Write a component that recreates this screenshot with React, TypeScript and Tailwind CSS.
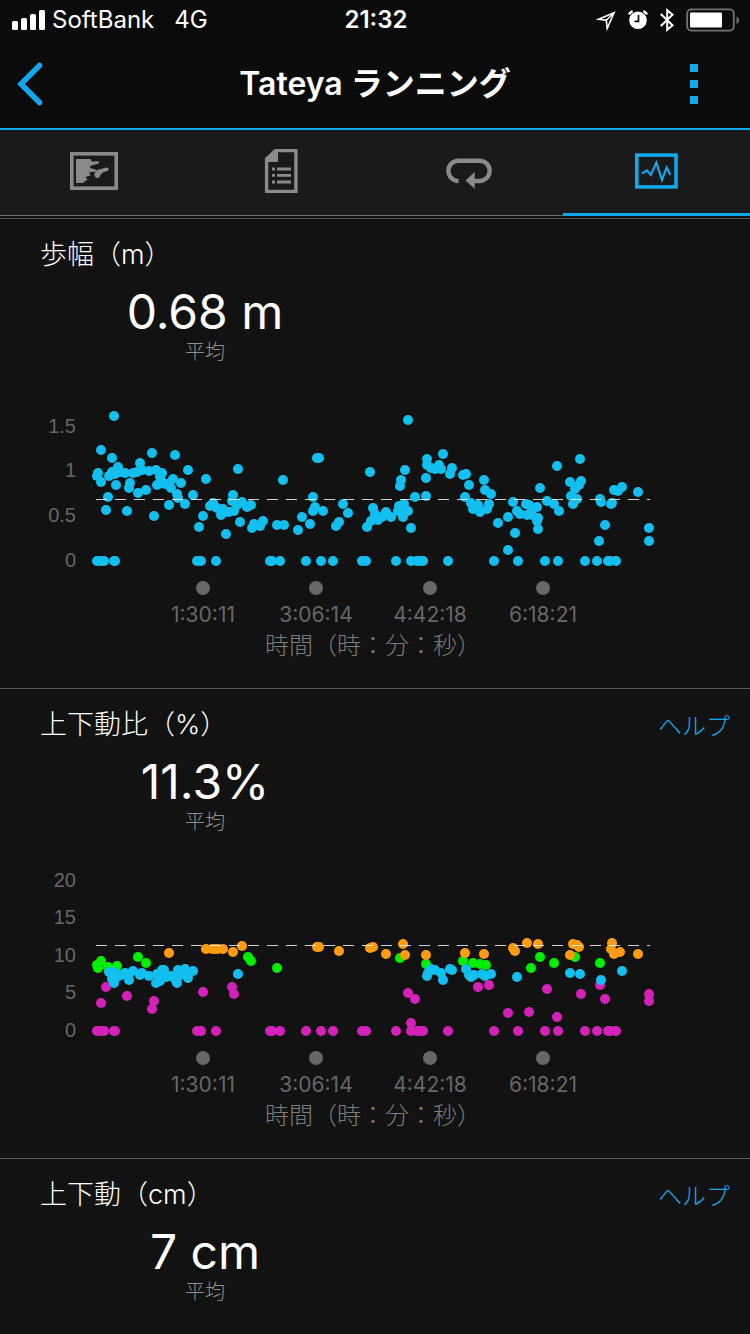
import type { ReactNode } from 'react';

type Point = [x: number, y: number];

interface Series {
  color: string;
  points: Point[];
}

interface ChartProps {
  label: string;
  ticks: { text: string; y: number }[];
  averageY: number;
  series: Series[];
}

const BASELINE = 161;

const X_TICKS = [
  { x: 203, text: '1:30:11' },
  { x: 316, text: '3:06:14' },
  { x: 430, text: '4:42:18' },
  { x: 543, text: '6:18:21' },
];

// Samples taken while standing still
const STOPPED: Point[] = [
  97, 101, 104, 114, 115, 197, 201, 216, 270, 272, 280, 306, 321, 333, 362, 366, 396, 411, 417, 420,
  423, 448, 494, 518, 545, 558, 585, 597, 608, 610, 616,
].map((x) => [x, BASELINE]);

const STRIDE: Point[] = [
  [114, 16], [101, 50], [112, 58], [152, 53], [175, 55], [140, 63], [118, 67], [98, 73], [97, 76],
  [101, 82], [109, 76], [112, 72], [115, 74], [116, 85], [108, 97], [106, 110], [127, 111],
  [154, 116], [130, 83], [129, 88], [138, 93], [146, 90], [120, 72], [125, 73], [133, 73],
  [137, 72], [142, 70], [149, 71], [156, 70], [162, 73], [160, 77], [157, 85], [162, 82],
  [165, 84], [168, 84], [173, 79], [181, 83], [171, 88], [188, 70], [177, 94], [178, 98],
  [169, 105], [185, 104], [193, 95], [206, 79], [199, 127], [203, 116], [238, 69], [210, 106],
  [213, 103], [217, 108], [221, 115], [223, 109], [225, 112], [229, 112], [234, 111], [233, 95],
  [232, 101], [237, 105], [242, 102], [247, 107], [240, 122], [226, 134], [251, 105], [252, 128],
  [254, 124], [260, 126], [263, 121], [283, 80], [277, 125], [284, 125], [298, 130], [302, 117],
  [310, 124], [313, 111], [315, 107], [313, 97], [317, 58], [319, 58], [323, 111], [336, 126],
  [339, 122], [343, 104], [348, 113], [370, 72], [373, 108], [375, 114], [367, 127], [371, 121],
  [375, 117], [378, 120], [382, 117], [386, 112], [391, 117], [401, 80], [400, 86], [405, 70],
  [399, 106], [404, 104], [398, 111], [403, 117], [403, 111], [408, 111], [411, 128], [415, 97],
  [408, 20], [426, 96], [426, 78], [427, 59], [427, 65], [431, 68], [435, 69], [439, 65],
  [441, 69], [443, 54], [452, 68], [450, 74], [463, 75], [466, 74], [469, 85], [484, 80],
  [485, 90], [491, 94], [465, 97], [471, 103], [473, 109], [478, 105], [480, 112], [487, 109],
  [489, 104], [498, 123], [508, 117], [508, 150], [515, 133], [513, 102], [517, 111], [520, 114],
  [526, 104], [529, 105], [527, 115], [532, 109], [537, 107], [532, 115], [538, 118], [537, 121],
  [538, 129], [540, 88], [547, 101], [554, 104], [559, 111], [557, 66], [580, 59], [570, 82],
  [581, 81], [579, 85], [575, 89], [571, 96], [577, 99], [573, 104], [600, 99], [601, 102],
  [611, 104], [612, 103], [614, 90], [618, 91], [622, 87], [638, 92], [605, 125], [599, 141],
  [649, 128], [649, 141],
];

const RATIO_POOR: Point[] = [
  [106, 117], [101, 133], [127, 126], [154, 131], [152, 139], [203, 122], [232, 117], [234, 124],
  [408, 123], [415, 129], [411, 153], [478, 117], [489, 115], [547, 119], [508, 143], [529, 142],
  [557, 147], [581, 124], [600, 115], [605, 129], [649, 124], [649, 131],
];

const RATIO_FAIR: Point[] = [
  [169, 83], [206, 79], [212, 79], [215, 79], [218, 79], [223, 79], [233, 82], [242, 76],
  [317, 77], [319, 77], [339, 81], [370, 78], [373, 77], [386, 84], [403, 74], [405, 85],
  [426, 85], [465, 83], [484, 84], [513, 78], [515, 81], [527, 73], [538, 74], [570, 85],
  [573, 74], [577, 75], [579, 77], [612, 73], [611, 79], [614, 84], [620, 82], [638, 84],
];

const RATIO_GOOD: Point[] = [
  [101, 91], [97, 95], [98, 98], [108, 97], [117, 96], [138, 87], [146, 93], [248, 87], [251, 91],
  [277, 98], [400, 88], [426, 94], [463, 91], [473, 93], [480, 94], [486, 95], [540, 87],
  [531, 98], [554, 93], [575, 87], [600, 93],
];

const RATIO_GREAT: Point[] = [
  [109, 102], [112, 109], [114, 113], [114, 102], [117, 107], [121, 105], [125, 103], [129, 110],
  [129, 104], [133, 101], [140, 105], [142, 103], [149, 106], [156, 113], [157, 104], [160, 111],
  [162, 100], [164, 100], [166, 107], [171, 106], [175, 109], [177, 113], [178, 100], [179, 106],
  [185, 99], [188, 108], [193, 101], [183, 104], [238, 104], [427, 106], [428, 103], [431, 99],
  [435, 100], [441, 103], [443, 110], [450, 99], [452, 100], [466, 99], [469, 105], [471, 107],
  [474, 105], [482, 104], [485, 106], [491, 104], [517, 107], [570, 103], [580, 104], [601, 110],
  [622, 101],
];

const STRIDE_CHART: ChartProps = {
  label: '歩幅',
  ticks: [
    { text: '1.5', y: 26 },
    { text: '1', y: 70 },
    { text: '0.5', y: 115 },
    { text: '0', y: 160 },
  ],
  averageY: 99.5,
  series: [{ color: '#12bfee', points: [...STOPPED, ...STRIDE] }],
};

const RATIO_CHART: ChartProps = {
  label: '上下動比',
  ticks: [
    { text: '20', y: 10 },
    { text: '15', y: 47 },
    { text: '10', y: 85 },
    { text: '5', y: 122 },
    { text: '0', y: 160 },
  ],
  averageY: 75.5,
  series: [
    { color: '#d321ba', points: [...STOPPED, ...RATIO_POOR] },
    { color: '#00ef00', points: RATIO_GOOD },
    { color: '#12bfee', points: RATIO_GREAT },
    { color: '#ff9c10', points: RATIO_FAIR },
  ],
};

function ScatterChart({ label, ticks, averageY, series }: ChartProps) {
  return (
    <svg viewBox="0 0 750 288" className="block w-full" role="img" aria-label={label}>
      <g className="fill-[#676767] font-['Liberation_Sans',sans-serif] text-[20px]" textAnchor="end">
        {ticks.map((tick) => (
          <text key={tick.text} x="76" y={tick.y + 7}>
            {tick.text}
          </text>
        ))}
      </g>
      {series.map((s) => (
        <g key={s.color} fill={s.color}>
          {s.points.map(([x, y], i) => (
            <circle key={i} cx={x} cy={y} r="5" />
          ))}
        </g>
      ))}
      <line
        x1="96"
        x2="650"
        y1={averageY}
        y2={averageY}
        stroke="#fff"
        strokeOpacity="0.8"
        strokeDasharray="11 8"
      />
      <g className="fill-[#676767] text-[21px]" textAnchor="middle">
        {X_TICKS.map((tick) => (
          <g key={tick.text}>
            <circle cx={tick.x} cy="188" r="7" />
            <text x={tick.x} y="222">
              {tick.text}
            </text>
          </g>
        ))}
        <text x="373" y="254" className="fill-[#7c7c7c] text-[24px] font-light">
          時間（時：分：秒）
        </text>
      </g>
    </svg>
  );
}

interface MetricSectionProps {
  title: string;
  value: string;
  help?: boolean;
  children?: ReactNode;
}

function MetricSection({ title, value, help, children }: MetricSectionProps) {
  return (
    <section className="border-t border-[#585858] pt-4">
      <div className="flex items-center justify-between pr-5 pl-10">
        <h2 className="text-[27px] leading-10 font-light">{title}</h2>
        {help && (
          <a href="#help" className="pt-1 text-[24px] leading-9 font-light text-[#12a8ec]">
            ヘルプ
          </a>
        )}
      </div>
      <div className="mt-2 ml-10 flex w-[44%] flex-col items-center">
        <span className="text-[48px] leading-[57px]">{value}</span>
        <span className="text-[20px] leading-6 font-light text-[#8f8f8f]">平均</span>
      </div>
      <div className="pt-9">{children}</div>
    </section>
  );
}

function StatusBar() {
  return (
    <div className="flex h-10 items-center pr-1 pl-3 text-[24px] leading-10">
      <div className="flex flex-1 items-center">
        <svg viewBox="0 0 34 20" className="mr-[6px] h-5 w-[34px]" fill="#fff" aria-hidden="true">
          <rect x="0" y="11" width="6" height="9" rx="1.5" />
          <rect x="9" y="8" width="6" height="12" rx="1.5" />
          <rect x="18" y="4" width="6" height="16" rx="1.5" />
          <rect x="27" y="0" width="6" height="20" rx="1.5" />
        </svg>
        <span>SoftBank</span>
        <span className="ml-5">4G</span>
      </div>
      <time className="font-semibold">21:32</time>
      <div className="mr-[6px] flex flex-1 items-center justify-end">
        <svg viewBox="0 0 20 24" className="mr-3 h-6 w-5" fill="none" stroke="#fff" aria-hidden="true">
          <path d="M2.5 11.2 18 4.7 11.2 20.5 10.3 12.3Z" strokeWidth="1.6" />
          <path d="M18 4.7 10.3 12.3" strokeWidth="1.4" />
        </svg>
        <svg viewBox="0 0 20 24" className="mr-3 h-6 w-5" aria-hidden="true">
          <circle cx="10" cy="12.3" r="8.8" fill="#fff" />
          <path d="M.8 6.4A10 10 0 0 1 4.6 3.2M15.4 3.2A10 10 0 0 1 19.2 6.4" fill="none" stroke="#fff" strokeWidth="2.4" />
          <path d="M10.5 7v6.3H6.5" fill="none" stroke="#0b0b0b" strokeWidth="1.7" />
        </svg>
        <svg viewBox="0 0 14 24" className="mr-3 h-6 w-[14px]" fill="none" stroke="#fff" strokeWidth="2" aria-hidden="true">
          <path d="M.8 6 12.5 17.2 7.2 21.8V2.2L12.5 6.8.8 18" />
        </svg>
        <svg viewBox="0 0 54 24" className="h-6 w-[54px]" aria-hidden="true">
          <rect x="1.2" y="1.4" width="46.6" height="21.2" rx="4" fill="none" stroke="#747474" strokeWidth="1.8" />
          <rect x="4" y="4.5" width="32" height="15" rx="1" fill="#fff" />
          <path d="M50.5 8.5Q53 9.5 53 12.2T50.5 16Z" fill="#747474" />
        </svg>
      </div>
    </div>
  );
}

function MapIcon() {
  return (
    <svg viewBox="0 0 48 48" className="size-12" aria-hidden="true">
      <rect x="1.8" y="6.8" width="44.4" height="34.4" fill="none" stroke="currentColor" strokeWidth="3.6" />
      <path
        d="M6 12H20.4C21.4 12.6 21 14 22 14.6L28 14.2C29.8 14.4 29.7 16.3 28 16.8L21.5 18.4 19.8 20C20.5 21.8 22.5 21.8 25 22.2 26.8 22.8 26.4 24.6 24.8 24.8L19.5 25.2C18.6 26 20 27 20.6 27.6 20.8 29.6 17 28.8 15.6 30.2 15.8 31.4 17.4 31.6 17.4 33 16.6 34 14 34 13.4 36H6Z"
        fill="currentColor"
      />
      <path
        d="M37.2 20.4c1.7.2 2.3 2.5.6 3.3-2.4 1.1-5 1.2-6.6 3.3-1.5 1.8-1.6 4-3.3 4-2.5-.1-4-1.7-3.5-4 .6-2.6 2.2-4.7 5.2-4.8 2.8-.2 4.6-2 7.6-1.8Z"
        fill="currentColor"
      />
    </svg>
  );
}

function SummaryIcon() {
  return (
    <svg viewBox="0 0 48 48" className="size-12" fill="none" stroke="currentColor" aria-hidden="true">
      <path d="M18.3 3.6h20.6v40.8H9.6V12.2Z" strokeWidth="3.4" />
      <path d="M18 3h3v12H8v-4Z" fill="currentColor" stroke="none" />
      <path d="M20 22h14M20 28.4h14M20 35h14" strokeWidth="2.8" />
      <path d="M15 22h3M15 28.4h3M15 35h3" strokeWidth="2.8" />
    </svg>
  );
}

function LapsIcon() {
  return (
    <svg viewBox="0 0 48 48" className="size-12" aria-hidden="true">
      <path
        d="M13.5 34A10.15 10.15 0 0 1 13.5 13.7H34.5A10.15 10.15 0 0 1 34.5 34H28"
        fill="none"
        stroke="currentColor"
        strokeWidth="4.4"
      />
      <path d="M20.5 33.5 29.7 25v16.8Z" fill="currentColor" />
    </svg>
  );
}

function GraphIcon() {
  return (
    <svg viewBox="0 0 48 48" className="size-12" fill="none" stroke="currentColor" aria-hidden="true">
      <rect x="4.8" y="8.1" width="39.2" height="31.8" strokeWidth="3.6" />
      <path d="M10 26.5 15 23.4 18.7 28 24.4 15.8 30 33 34.7 20.5 38.2 28" strokeWidth="2.2" />
    </svg>
  );
}

const TABS = [
  { name: 'マップ', icon: <MapIcon /> },
  { name: '概要', icon: <SummaryIcon /> },
  { name: 'ラップ', icon: <LapsIcon /> },
  { name: 'グラフ', icon: <GraphIcon />, active: true },
];

export default function App() {
  return (
    <div lang="ja" className="min-h-screen bg-[#121212] font-['Inter','Noto_Sans_CJK_JP',sans-serif] text-white">
      <header className="border-b-2 border-[#12a8ec] bg-[#0b0b0b]">
        <StatusBar />
        <div className="flex h-22 items-center justify-between px-4">
          <button type="button" aria-label="戻る" className="w-12">
            <svg viewBox="0 0 28 44" className="h-11 w-7" fill="none" stroke="#12a8ec" aria-hidden="true">
              <path d="M23.5 3.5 5 22 23.5 40.5" strokeWidth="5.5" strokeLinecap="round" />
            </svg>
          </button>
          <h1 className="text-[32px] leading-10 font-semibold">Tateya ランニング</h1>
          <button type="button" aria-label="メニュー" className="flex w-12 flex-col gap-2 pl-1">
            <span className="size-2 bg-[#12a8ec]" />
            <span className="size-2 bg-[#12a8ec]" />
            <span className="size-2 bg-[#12a8ec]" />
          </button>
        </div>
      </header>

      <nav className="mb-[2px] grid h-[86px] grid-cols-4 bg-[#1a1a1a]">
        {TABS.map((tab) => (
          <button
            key={tab.name}
            type="button"
            aria-label={tab.name}
            aria-current={tab.active ? 'page' : undefined}
            className={
              tab.active
                ? 'flex justify-center border-b-3 border-[#12a8ec] pt-[17px] text-[#12a8ec]'
                : 'flex justify-center border-b border-[#6b6b6b] pt-[17px] text-[#8a8a8a]'
            }
          >
            {tab.icon}
          </button>
        ))}
      </nav>

      <main>
        <MetricSection title="歩幅（m）" value="0.68 m">
          <ScatterChart {...STRIDE_CHART} />
        </MetricSection>
        <MetricSection title="上下動比（%）" value="11.3%" help>
          <ScatterChart {...RATIO_CHART} />
        </MetricSection>
        <MetricSection title="上下動（cm）" value="7 cm" help />
      </main>
    </div>
  );
}
